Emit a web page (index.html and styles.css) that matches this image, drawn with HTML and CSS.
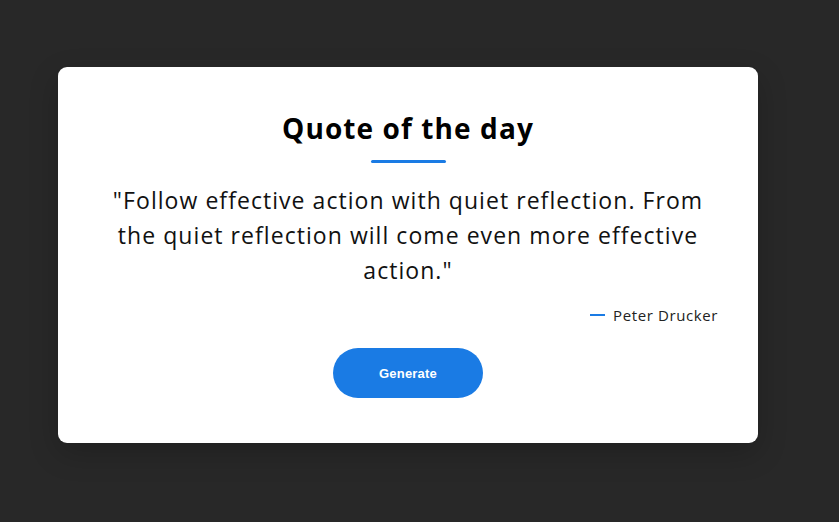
FILE: index.html
```html
<!DOCTYPE html>
<html lang="en">
<head>
<meta charset="utf-8">
<title>Quote of the day</title>
<link rel="stylesheet" href="styles.css">
</head>
<body>
<main class="card">
  <h1 class="title">Quote of the day</h1>
  <div class="rule"></div>
  <p class="quote">"Follow effective action with quiet reflection. From the quiet reflection will come even more effective action."</p>
  <div class="author"><span class="dash"></span><span class="name">Peter Drucker</span></div>
  <button class="btn" type="button">Generate</button>
</main>
</body>
</html>
```
FILE: styles.css
```css
html, body {
  margin: 0;
  padding: 0;
}
body {
  background: #282828;
  font-family: "Open Sans", "DejaVu Sans", sans-serif;
  width: 839px;
  height: 522px;
  overflow: hidden;
}
.card {
  box-sizing: border-box;
  width: 700px;
  height: 376px;
  margin: 67px 0 0 58px;
  background: #ffffff;
  border-radius: 9px;
  box-shadow: 0 10px 30px rgba(0, 0, 0, 0.2);
  padding: 40px 40px 0 40px;
  display: flex;
  flex-direction: column;
  align-items: center;
}
.title {
  margin: 0;
  font-size: 28px;
  line-height: 42px;
  font-weight: 700;
  letter-spacing: 1.1px;
  color: #000;
}
.rule {
  width: 75px;
  height: 3px;
  background: #1a7be4;
  margin-top: 11px;
  border-radius: 2px;
}
.quote {
  margin: 20px 0 0 0;
  width: 616px;
  text-align: center;
  font-size: 23px;
  line-height: 35px;
  letter-spacing: 1.05px;
  color: #111;
}
.author {
  align-self: flex-end;
  display: flex;
  align-items: center;
  gap: 8px;
  margin-top: 17px;
  font-size: 15px;
  letter-spacing: 0.6px;
  color: #222;
}
.dash {
  width: 15px;
  height: 2px;
  background: #1a7be4;
}
.btn {
  margin-top: 23px;
  width: 150px;
  height: 50px;
  border: none;
  border-radius: 25px;
  background: #1a7be4;
  color: #fff;
  font-family: "Liberation Sans", Arial, sans-serif;
  font-weight: 700;
  font-size: 13px;
  letter-spacing: 0.2px;
}
```
